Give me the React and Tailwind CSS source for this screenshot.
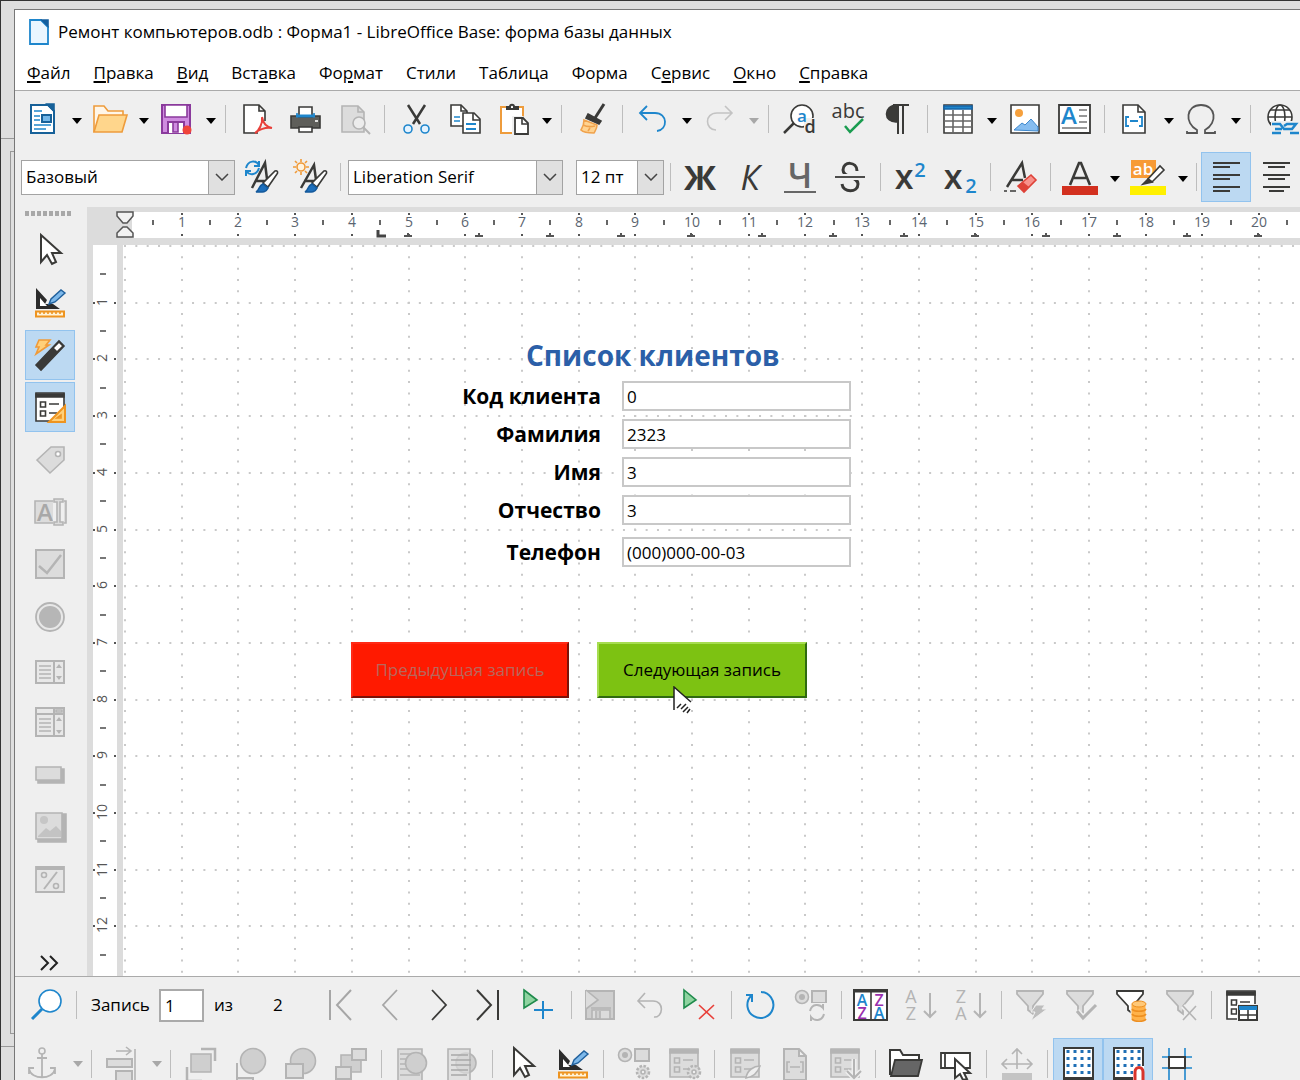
import React from "react";

const D = "#3a3a38";
const B = "#1e86cc";
const G = "#b4b4b4";
const L = "#dcdcdc";
const FONT = "font-['Open_Sans','Noto_Sans',sans-serif]";

function Icon({ children }) {
  return (
    <svg width="36" height="36" viewBox="0 0 36 36" fill="none" stroke={D} strokeWidth="1.6" className="shrink-0 overflow-visible" aria-hidden="true">
      {children}
    </svg>
  );
}

function T({ x, y, size, fill = D, weight = 400, italic, children }) {
  return (
    <text x={x} y={y} fontSize={size} fill={fill} stroke="none" fontWeight={weight} fontStyle={italic ? "italic" : "normal"} fontFamily="'Open Sans', sans-serif" textAnchor="middle">
      {children}
    </text>
  );
}

const Setsquare = () => (
  <>
    <path d="M4 4v21h24l-7-5H13l2-4z" fill="#2b2b2b" stroke="none" />
    <path d="M8 14l7 8H8z" fill="#fff" stroke="none" />
    <path d="M17 20l2-5 10-9 4 3-10 9z" fill="#7db8ea" stroke="#20609c" strokeWidth="1.4" />
    <path d="M4 27.500h28v5H4z" fill="#fff3d8" stroke="#ee9420" strokeWidth="2" />
    <path d="M8 28v2m4-2v2m4-2v2m4-2v2m4-2v2m4-2v2" stroke="#ee9420" />
  </>
);

const FormWin = ({ c = D, f = "#fff" }) => (
  <>
    <path d="M4 4h28v28H4z" fill={f} stroke={c} />
    <path d="M4 5h28v3H4z" fill={c} stroke={c} />
    <path d="M8.500 13h5v5h-5zM8.500 22h5v5h-5zM17 15h10M17 24h8" stroke={c} />
  </>
);

const Shapes = () => (
  <>
    <circle cx="9" cy="10" r="6.500" fill={L} stroke={G} />
    <circle cx="9" cy="10" r="3" fill={G} stroke="none" />
    <path d="M19 4h14v12H19z" fill={L} stroke={G} strokeWidth="2" />
  </>
);

const Gear = ({ x, y }) => (
  <>
    <circle cx={x} cy={y} r="6" fill={L} stroke={G} strokeWidth="2.500" strokeDasharray="2.500 1.500" />
    <circle cx={x} cy={y} r="2" fill="#efefef" stroke={G} />
  </>
);

const Funnel = ({ c = G, f = L }) => <path d="M4 4h26v3L20 19v8l-5-4v-4L4 7z" fill={f} stroke={c} strokeWidth="1.800" />;

const Brush = () => (
  <>
    <path d="M31 12c3-1 3 2 2 3l-9 13-5-4z" fill="#fff" stroke={D} />
    <path d="M19 25l5 4c-2 5-7 4-12 4 4-2 2-6 7-8z" fill="#1e70bd" stroke="#155a9c" />
  </>
);

const icons = {
  app: (
    <>
      <path d="M9 6h11l7 7v17H9z" fill="#eaf6ff" stroke={B} strokeWidth="1.800" />
      <path d="M21 6h6v6z" fill="#155f9e" stroke="#155f9e" />
    </>
  ),
  newdoc: (
    <>
      <path d="M6 4h17l6 6v22H6z" fill="#fff" stroke="#176199" strokeWidth="2" />
      <path d="M22 3h7v7z" fill="#176199" stroke="#176199" />
      <path d="M9 10h8M9 15h6M9 19h6M9 24h17M9 28h12" stroke="#1e86cc" />
      <path d="M17 14h9v7h-9z" fill="#74b7e8" stroke="#176199" strokeWidth="2" />
    </>
  ),
  open: (
    <>
      <path d="M2 31V5h10l4 5h15v6" fill="#fff6e8" stroke="#ee9c3c" />
      <path d="M7 14h28l-5 17H2z" fill="#ffd68c" stroke="#ee9c3c" />
    </>
  ),
  save: (
    <>
      <path d="M3 4h28v28H3z" fill="#cf8be0" stroke="#8a3a9c" strokeWidth="2" />
      <path d="M6 4h22v12H6z" fill="#fff" stroke="#8a3a9c" />
      <path d="M9 32V21h16v11" fill="#fff" stroke="#8a3a9c" strokeWidth="2" />
      <path d="M14 22v9h5v-9" fill="#cf8be0" stroke="#8a3a9c" />
      <circle cx="28" cy="29" r="4.500" fill="#f0443a" stroke="none" />
    </>
  ),
  pdf: (
    <>
      <path d="M27 20V10l-6-6H6v28h14M21 4v6h6" fill="none" />
      <path d="M7 5h13v6h6v12l-8 8H7z" fill="#fff" stroke="none" />
      <path d="M17 32c4-2 8-10 7-16 1 6 4 10 10 11-5-1-10 0-16 4" stroke="#e8403a" strokeWidth="2" />
    </>
  ),
  print: (
    <>
      <path d="M4 15h29v12H4z" fill="#5e5e5a" stroke={D} />
      <path d="M12 6h13v10H12z" fill="#fff" />
      <path d="M9 15h19" stroke={B} strokeWidth="3" />
      <path d="M10 12v3M27 12v3" stroke={B} />
      <path d="M12 26h13v5H12z" fill="#fff" />
      <path d="M28 20h3" stroke="#fff" />
    </>
  ),
  preview: (
    <>
      <path d="M6 5h16l6 6v20H6z" fill={L} stroke={G} />
      <path d="M22 5v6h6" stroke={G} />
      <circle cx="23" cy="22" r="6" fill="#ececec" stroke={G} />
      <path d="M27 26l7 7" stroke={G} strokeWidth="2" />
    </>
  ),
  cut: (
    <>
      <path d="M11 4l12 19M28 4L16 23" strokeWidth="2.500" />
      <circle cx="11" cy="28" r="4" stroke={B} fill="#e4f3ff" />
      <circle cx="28" cy="28" r="4" stroke={B} fill="#e4f3ff" />
    </>
  ),
  copy: (
    <>
      <path d="M5 4h10l6 6v15H5z" fill="#fff" />
      <path d="M15 4v6h6" />
      <path d="M8 16h6M8 20h6" stroke={B} />
      <path d="M17 12h11l6 6v14H17z" fill="#fff" />
      <path d="M27 12v7h7" />
      <path d="M20 23h10M20 28h10" stroke={B} strokeWidth="2" />
    </>
  ),
  paste: (
    <>
      <path d="M6 6h22v26H6z" fill="#fff" stroke="#ee9c3c" strokeWidth="2" />
      <path d="M12 8v-2h3c0-3 4-3 4 0h4v2z" fill="#fff" strokeWidth="2" />
      <path d="M17 15h11l6 5v15H17z" fill="#efefef" stroke="none" />
      <path d="M20 17h8l5 5v11H20z" fill="#fff" strokeWidth="1.800" />
      <path d="M27 17v6h6" />
    </>
  ),
  clone: (
    <>
      <path d="M30 3l-9 14" strokeWidth="3" />
      <path d="M14 13l13 7-2 3-13-6z" fill={D} stroke={D} />
      <path d="M10 19l13 5c0 4-2 6-3 8-5 0-10 0-13-3 2-3 3-6 3-10z" fill="#ffd391" stroke="#f0a24c" />
      <path d="M9 24c4 2 8 2 12 1M14 30l2-3" stroke="#f0a24c" />
    </>
  ),
  undo: <path d="M12 5L5 12l7 7M5 12h15c13 0 13 17 2 18" stroke={B} strokeWidth="1.800" />,
  redo: <path d="M23 5l7 7-7 7M30 12H15c-13 0-12 17-1 17" stroke="#c3c3c3" />,
  find: (
    <>
      <circle cx="21" cy="15" r="11" fill="#fff" />
      <path d="M13 22L3 32" strokeWidth="2.500" />
      <path d="M23 17h12v15H23z" fill="#efefef" stroke="none" />
      <T x="21" y="21" size="17" fill={B} weight={600}>a</T>
      <T x="29" y="32" size="18" weight={600}>d</T>
    </>
  ),
  spell: (
    <>
      <T x="18" y="17" size="20">abc</T>
      <path d="M15 25l5 6 13-13" stroke="#1a9c50" strokeWidth="2.500" />
    </>
  ),
  pilcrow: (
    <>
      <path d="M18 4v17C4 22 4 4 18 4z" fill={D} />
      <path d="M14 4h16M19 4v29M24 4v29" strokeWidth="2" />
    </>
  ),
  table: (
    <>
      <path d="M4 4h28v28H4z" fill="#fff" stroke={D} />
      <path d="M4 5h28v3H4z" fill={B} stroke="#1766a8" />
      <path d="M4 14h28M4 20h28M4 26h28M13 9v23M23 9v23" stroke="#666" />
    </>
  ),
  image: (
    <>
      <path d="M4 4h28v28H4z" fill="#fff" />
      <path d="M7 29l8-7 3 2 6-6 7 8v4z" fill="#86bdf0" stroke="#3d87cc" strokeWidth="1" />
      <circle cx="12" cy="12" r="4" fill="#f6a03c" stroke="none" />
    </>
  ),
  textbox: (
    <>
      <path d="M3 4h31v28H3z" fill="#fff" strokeWidth="1.800" />
      <T x="13" y="23" size="24" fill={B} weight={600}>A</T>
      <path d="M23 9h8M23 15h8M23 21h8M6 27h25" stroke="#777" />
    </>
  ),
  field: (
    <>
      <path d="M6 4h15l7 7v21H6z" fill="#fff" />
      <path d="M21 4v7h7" />
      <path d="M12 16H9v9h3M22 16h3v9h-3M13 20h8" stroke={B} strokeWidth="1.800" />
    </>
  ),
  omega: <path d="M3 30v2h10v-3C0 22 2 4 17 4s17 18 4 25v3h10v-2" stroke="#555" strokeWidth="1.800" />,
  link: (
    <>
      <circle cx="17" cy="16" r="12" fill="#fff" />
      <ellipse cx="17" cy="16" rx="5" ry="12" />
      <path d="M5 16h24M7 9h20M7 22h20" />
      <path d="M8 20h28v14H8z" fill="#efefef" stroke="none" />
      <path d="M9 23h8l4 5h8l4-5h-9l-3 2M9 32h9M36 32h-9M12 28h7" stroke={B} strokeWidth="2.500" />
    </>
  ),
  styleUpd: (
    <>
      <path d="M8 29l13-25 3 24M11 22h11" strokeWidth="2.500" />
      <path d="M2 9c2-8 10-8 13-3M15 2v5h-5M15 9c-2 7-9 8-13 3M2 17v-5h5" stroke={B} strokeWidth="2" />
      <Brush />
    </>
  ),
  styleNew: (
    <>
      <path d="M8 29l13-23 3 22M11 22h11" strokeWidth="2.500" />
      <circle cx="8" cy="8" r="4" fill="#fff3df" stroke="#f09a38" />
      <path d="M8 0v3M8 13v3M0 8h3M13 8h3M2 2l2 2M12 12l2 2M14 2l-2 2M4 12l-2 2" stroke="#f09a38" />
      <Brush />
    </>
  ),
  strike: (
    <>
      <path d="M25 12c0-10-14-10-14-1 0 8 15 6 15 14 0 9-15 9-16 0" strokeWidth="3" />
      <path d="M3 15h30v6H3z" fill="#efefef" stroke="none" />
      <path d="M3 18h30" strokeWidth="1.800" />
    </>
  ),
  sup: (
    <>
      <T x="12" y="30" size="34" weight={600}>x</T>
      <T x="28" y="18" size="20" fill={B} weight={600}>2</T>
    </>
  ),
  sub: (
    <>
      <T x="11" y="30" size="34" weight={600}>x</T>
      <T x="29" y="34" size="20" fill={B} weight={600}>2</T>
    </>
  ),
  clear: (
    <>
      <path d="M5 28L20 4l3 15M10 21h11" strokeWidth="2.500" />
      <path d="M2 32h3M8 32h6" />
      <path d="M16 27L29 16l5 5-12 12z" fill="#f7918b" stroke="#de4238" />
      <path d="M16 27l5-4 6 5-5 5z" fill="#de4238" stroke="none" />
    </>
  ),
  color: (
    <>
      <path d="M8 26L17 4h2l9 22M12 19h12" strokeWidth="2.600" />
      <path d="M0 27h36v9H0z" fill="#d3301f" stroke="none" />
    </>
  ),
  marker: (
    <>
      <path d="M1 1h25v18H1z" fill="#f79a35" stroke="none" />
      <T x="13" y="16" size="17" fill="#fff" weight={600}>ab</T>
      <path d="M18 20L30 7l4 4-12 12z" fill="#fff" />
      <path d="M13 25l5-5 4 3z" fill={D} />
      <path d="M0 27h36v9H0z" fill="#fff000" stroke="none" />
    </>
  ),
  alignL: <path d="M5 4h27M5 8h17M5 16h27M5 20h17M5 28h27M5 32h17" strokeWidth="2" />,
  alignC: <path d="M5 4h27M10 8h17M5 16h27M10 20h17M5 28h27M11 32h15" strokeWidth="2" />,
  pointer: <path d="M9 3v27l6-7 5 9 4-2-4-9h9z" fill="#fff" strokeWidth="2" />,
  design: <Setsquare />,
  wand: (
    <>
      <path d="M7 3h11l-4 5h3L4 17l3-7H4z" fill="#ffd07a" stroke="#f09a38" />
      <path d="M4 28L27 4l5 5L9 33z" fill={D} />
      <path d="M21 11l6-6 4 4-6 6z" fill="#fff" />
    </>
  ),
  formprops: (
    <>
      <FormWin />
      <path d="M33 17v16H17z" fill="#ffd07a" stroke="#ee9420" strokeWidth="2" />
      <path d="M29 26v3h-4z" fill="#fff" stroke="#ee9420" />
    </>
  ),
  tag: (
    <>
      <path d="M5 18L19 5h13v13L18 31z" fill={L} stroke={G} />
      <circle cx="26" cy="12" r="2.500" fill="#fff" stroke={G} />
    </>
  ),
  textfield: (
    <>
      <path d="M3 7h31v22H3z" fill={L} stroke={G} />
      <T x="13" y="27" size="24" fill="#a8a8a8" weight={600}>A</T>
      <path d="M21 5h11v26H21z" fill="#efefef" stroke="none" />
      <path d="M22 5h9v3h-3v20h3v3h-9v-3h3V8h-3z" fill={L} stroke={G} />
    </>
  ),
  check: (
    <>
      <path d="M4 4h28v28H4z" fill={L} stroke={G} strokeWidth="2" />
      <path d="M7 20l8 7L29 9" stroke={G} strokeWidth="2.500" />
    </>
  ),
  radio: (
    <>
      <circle cx="18" cy="18" r="14" fill="#e8e8e8" stroke={G} strokeWidth="1.800" />
      <circle cx="18" cy="18" r="11" fill="#b6b6b6" stroke="none" />
    </>
  ),
  list: (
    <>
      <path d="M4 10h28v22H4zM22 10v22" fill="#e8e8e8" stroke={G} strokeWidth="2" />
      <path d="M7 15h12M7 19h12M7 23h12M7 27h12" stroke={G} />
      <path d="M27 13l3 4h-6zM27 29l3-4h-6z" fill={G} stroke="none" />
    </>
  ),
  combo: (
    <>
      <path d="M4 4h28v28H4zM22 4v28M4 10h28" fill="#e8e8e8" stroke={G} strokeWidth="2" />
      <path d="M7 15h12M7 19h12M7 23h12M7 27h12M24 6h6v2h-6z" stroke={G} />
      <path d="M27 13l3 4h-6zM27 30l3-4h-6z" fill={G} stroke="none" />
    </>
  ),
  push: (
    <>
      <path d="M6 13h26v14H6z" fill={G} stroke={G} />
      <path d="M4 11h25v13H4z" fill={L} stroke={G} />
    </>
  ),
  imgbtn: (
    <>
      <path d="M6 6h28v28H6z" fill={G} stroke={G} />
      <path d="M4 5h26v26H4z" fill={L} stroke={G} />
      <circle cx="12" cy="12" r="4" fill="#c6c6c6" stroke="none" />
      <path d="M6 28l8-8 4 3 6-5 5 5v6H6z" fill="#c3c3c3" stroke="none" />
    </>
  ),
  percent: (
    <>
      <path d="M4 6h28v25H4z" fill="#e6e6e6" stroke={G} strokeWidth="1.800" />
      <path d="M4 5h28v4H4z" fill={G} stroke="none" />
      <circle cx="12" cy="14" r="2.500" stroke={G} />
      <circle cx="24" cy="25" r="2.500" stroke={G} />
      <path d="M25 11L12 28" stroke={G} strokeWidth="2" />
    </>
  ),
  search: (
    <>
      <circle cx="22" cy="14" r="11" fill="#fff" stroke={B} />
      <path d="M14 22L4 32" stroke={B} strokeWidth="3" />
    </>
  ),
  first: <path d="M7 3v30M28 3L14 18l14 15" stroke="#a6a6a6" strokeWidth="2" />,
  prev: <path d="M24 3L10 18l14 15" stroke="#a6a6a6" strokeWidth="1.800" />,
  next: <path d="M9 3l14 15L9 33" strokeWidth="1.800" />,
  last: <path d="M4 3l14 15L4 33M25 3v30" strokeWidth="2" />,
  addrec: (
    <>
      <path d="M1 3l13 10L1 21z" fill="#8ed3a0" stroke="#1f8b4c" />
      <path d="M11 23h19M20 14v18" stroke={B} strokeWidth="2" />
    </>
  ),
  saverec: (
    <>
      <path d="M3 4h28v28H3z" fill="#cfcfcf" stroke={G} strokeWidth="2" />
      <path d="M3 3l12 10L3 22M8 21h20M9 23h18v9H9zM13 24v8h4v-8" fill={L} stroke={G} />
    </>
  ),
  undorec: <path d="M12 6l-7 8 7 7M5 14h15c12 0 10 17 1 16" stroke={G} />,
  delrec: (
    <>
      <path d="M1 3l12 10L1 21z" fill="#8ed3a0" stroke="#1f8b4c" />
      <path d="M16 18l15 14M31 18L16 32" stroke="#e8403a" />
    </>
  ),
  refresh: <path d="M8 9a13 13 0 1 0 10-4M3 8h6v7" stroke={B} strokeWidth="2" />,
  refreshctl: (
    <>
      <Shapes />
      <path d="M16 16h18v18H16z" fill="#efefef" stroke="none" />
      <path d="M17 24c2-8 10-7 13-3v-4M31 27c-2 8-10 7-13 3v4" stroke={G} strokeWidth="2" />
    </>
  ),
  sort: (
    <>
      <path d="M1 3h33v30H1z" fill="#fff" strokeWidth="2" />
      <path d="M1 4h33" strokeWidth="3" />
      <path d="M18 5v28" />
      <T x="9" y="19" size="16" fill={B} weight={600}>A</T>
      <T x="9" y="32" size="16" fill="#9a2fae" weight={600}>Z</T>
      <T x="26" y="19" size="16" fill="#9a2fae" weight={600}>Z</T>
      <T x="26" y="32" size="16" fill={B} weight={600}>A</T>
    </>
  ),
  asc: (
    <>
      <T x="8" y="16" size="18" fill={G}>A</T>
      <T x="8" y="33" size="18" fill={G}>Z</T>
      <path d="M27 6v24M21 24l6 6 6-6" stroke={G} strokeWidth="2" />
    </>
  ),
  desc: (
    <>
      <T x="8" y="16" size="18" fill={G}>Z</T>
      <T x="8" y="33" size="18" fill={G}>A</T>
      <path d="M27 6v24M21 24l6 6 6-6" stroke={G} strokeWidth="2" />
    </>
  ),
  autofilter: (
    <>
      <Funnel />
      <path d="M23 18h9l-3 4h5L18 34l4-9h-4z" fill="#bdbdbd" stroke="#efefef" strokeWidth="1" />
    </>
  ),
  applyfilter: (
    <>
      <Funnel />
      <path d="M14 24l6 7 13-13" stroke="#efefef" strokeWidth="6" />
      <path d="M14 24l6 7 13-13" stroke={G} strokeWidth="3" />
    </>
  ),
  dbfilter: (
    <>
      <Funnel c={D} f="#fff" />
      <path d="M18 17v15c2 3 13 3 15 0V17z" fill="#ffb24a" stroke="#efefef" strokeWidth="1" />
      <ellipse cx="26" cy="17" rx="7" ry="3" fill="#ffc877" stroke="#ee8f20" strokeWidth="1" />
      <path d="M19 22c2 3 12 3 14 0M19 27c2 3 12 3 14 0M19 32c2 3 12 3 14 0" stroke="#ee8f20" />
    </>
  ),
  nofilter: (
    <>
      <Funnel />
      <path d="M20 19l13 14M33 19L20 33" stroke="#efefef" strokeWidth="5" />
      <path d="M20 19l13 14M33 19L20 33" stroke={G} />
    </>
  ),
  datasrc: (
    <>
      <FormWin />
      <path d="M14 17h22v18H14z" fill="#efefef" stroke="none" />
      <path d="M16 19h18v14H16z" fill="#fff" strokeWidth="2" />
      <path d="M16 19h18v4H16z" fill={B} stroke="none" />
      <path d="M17 28h17M25 23v10" />
    </>
  ),
  anchor: (
    <>
      <circle cx="17" cy="6" r="3" stroke={G} />
      <path d="M17 9v24M12 13h10M4 24c2 11 24 11 26 0M4 29v-6h5M30 29v-6h-5" stroke={G} strokeWidth="1.800" />
    </>
  ),
  align: (
    <>
      <path d="M31 4v32M12 6h15M22 2l5 4-5 4" stroke={G} />
      <path d="M3 14h25v8H3zM12 26h16v10H12z" fill={L} stroke={G} strokeWidth="2" />
    </>
  ),
  front: (
    <>
      <path d="M18 4h14v12M4 22v14h15" stroke={G} strokeWidth="2.500" />
      <path d="M8 9h20v18H8z" fill="#cfcfcf" stroke={G} />
    </>
  ),
  forward: (
    <>
      <path d="M4 18v15h16v3H4z" fill={L} stroke={G} strokeWidth="2" />
      <circle cx="20" cy="16" r="12.500" fill="#cfcfcf" stroke={G} />
    </>
  ),
  backward: (
    <>
      <circle cx="20" cy="16" r="12.500" fill="#cfcfcf" stroke={G} />
      <path d="M3 19h17v14H3z" fill={L} stroke={G} strokeWidth="2" />
    </>
  ),
  back: (
    <>
      <path d="M8 10h20v17H8z" fill="#cfcfcf" stroke={G} />
      <path d="M19 4h14v11H19zM3 22h15v12H3z" fill={L} stroke={G} strokeWidth="2" />
    </>
  ),
  toFg: (
    <>
      <path d="M4 4h24v32H4z" fill={L} stroke={G} />
      <path d="M6 9h20M6 14h20M6 19h20M6 24h20M6 30h20" stroke={G} />
      <circle cx="22" cy="18" r="10.500" fill="#cfcfcf" stroke={G} />
    </>
  ),
  toBg: (
    <>
      <circle cx="22" cy="18" r="10" fill="#cfcfcf" stroke={G} />
      <path d="M4 4h22v32H4z" fill={L} stroke={G} fillOpacity="0.700" />
      <path d="M7 10h17M7 15h20M7 20h20M7 25h17M7 30h16" stroke="#a8a8a8" />
    </>
  ),
  ctlprops: (
    <>
      <Shapes />
      <Gear x="27" y="27" />
    </>
  ),
  formset: (
    <>
      <FormWin c={G} f={L} />
      <Gear x="28" y="27" />
    </>
  ),
  formnav: (
    <>
      <FormWin c={G} f={L} />
      <path d="M19 33c1-8 8-12 14-12-2 6-7 11-14 12z" fill="#efefef" stroke={G} />
    </>
  ),
  addfield: (
    <>
      <path d="M7 4h15l7 7v24H7zM22 4v7h7" fill={L} stroke={G} strokeWidth="2" />
      <path d="M13 17h-3v10h3M23 17h3v10h-3M13 22h10" stroke={G} />
    </>
  ),
  taborder: (
    <>
      <FormWin c={G} f={L} />
      <path d="M27 14v19M20 26l7 7 7-7" stroke="#efefef" strokeWidth="5" />
      <path d="M27 14v19M20 26l7 7 7-7" stroke={G} strokeWidth="2" />
    </>
  ),
  folder: (
    <>
      <path d="M2 30V5h10l3 5h16v5" fill="#fff" strokeWidth="2" />
      <path d="M7 15h27l-4 16H3z" fill="#666" stroke={D} strokeWidth="1.800" />
    </>
  ),
  autofocus: (
    <>
      <path d="M3 8h29v15H3zM7 8v15" fill="#fff" strokeWidth="1.800" />
      <path d="M17 14v19l5-4 3 6 4-1-3-6h6z" fill="#fff" strokeWidth="2" />
    </>
  ),
  position: (
    <>
      <path d="M18 4v20M13 9l5-5 5 5M3 19h30M8 14l-5 5 5 5M28 14l5 5-5 5" stroke={G} />
      <path d="M3 28h30v8H3z" fill="#c4c4c4" stroke="none" />
    </>
  ),
  grid: (
    <>
      <path d="M4 3h29v32H4z" fill="#fff" strokeWidth="2" />
      <path d="M8 5v28M15 5v28M22 5v28M29 5v28" stroke="#1e6fb5" strokeWidth="3" strokeDasharray="3 4" />
      <path d="M4 34h29" strokeWidth="4" />
    </>
  ),
  snap: (
    <>
      <path d="M4 3h29v32H4z" fill="#fff" strokeWidth="2" />
      <path d="M8 5v28M15 5v28M22 5v28M29 5v17" stroke="#1e6fb5" strokeWidth="3" strokeDasharray="3 4" />
      <path d="M4 34h20" strokeWidth="4" />
      <path d="M23 21h11v15H23z" fill="#fff" stroke="none" />
      <path d="M25 36v-9c0-6 8-6 8 0v9" stroke="#d8342c" strokeWidth="3" />
    </>
  ),
  guides: (
    <>
      <path d="M2 12h30M2 23h30M9 3v32M25 3v32" stroke={B} strokeWidth="1.600" />
      <path d="M9 12h16v11H9z" fill="#fff" strokeWidth="2" />
    </>
  ),
};

const Sep = ({ w = "w-[10px]" }) => (
  <span className={`flex shrink-0 justify-center ${w}`} role="separator">
    <span className="h-7 w-px bg-[#bdbdbd]" />
  </span>
);

const Drop = ({ off }) => (
  <button type="button" aria-label="Ещё" disabled={off} className="flex h-12 w-[18px] shrink-0 items-center justify-center pl-0.5 pt-1">
    <svg width="10" height="6" viewBox="0 0 10 6" aria-hidden="true">
      <path d="M0 0h10L5 6z" fill={off ? "#a8a8a8" : "#000"} />
    </svg>
  </button>
);

function Tool({ icon, label, w = "w-[50px]", on, children }) {
  return (
    <button
      type="button"
      aria-label={label || icon}
      aria-pressed={on}
      className={`flex h-[50px] shrink-0 items-center justify-center ${w} ${on ? "border border-[#92c3ee] bg-[#bcd9f2]" : ""}`}
    >
      {children || <Icon>{icons[icon]}</Icon>}
    </button>
  );
}

function Strip({ items, w, sep }) {
  return items.map((it, i) => {
    if (it === "|") return <Sep key={i} w={sep} />;
    if (it === "v") return <Drop key={i} />;
    if (it === "-v") return <Drop key={i} off />;
    if (it[0] === "*") return <Tool key={i} icon={it.slice(1)} w={w} on />;
    return <Tool key={i} icon={it} w={w} />;
  });
}

function Combo({ label, value, className }) {
  return (
    <div className={`relative h-[35px] shrink-0 ${className}`}>
      <select aria-label={label} defaultValue={value} className="h-full w-full appearance-none border border-[#a3a3a3] bg-white pl-1 text-[17px] text-black">
        <option>{value}</option>
      </select>
      <span className="pointer-events-none absolute inset-y-0 right-0 flex w-[27px] items-center justify-center border border-[#a3a3a3] bg-[#e0e0e0]">
        <svg width="14" height="8" viewBox="0 0 14 8" fill="none" stroke="#444" strokeWidth="1.500" aria-hidden="true">
          <path d="M1 1l6 6 6-6" />
        </svg>
      </span>
    </div>
  );
}

const menu = [
  ["", "Ф", "айл"],
  ["", "П", "равка"],
  ["", "В", "ид"],
  ["Вст", "а", "вка"],
  ["Фо", "р", "мат"],
  ["Стили", "", ""],
  ["Таблица", "", ""],
  ["Форма", "", ""],
  ["С", "е", "рвис"],
  ["", "О", "кно"],
  ["", "С", "правка"],
];

const standard = ["newdoc", "v", "open", "v", "save", "v", "|", "pdf", "print", "preview", "|", "cut", "copy", "paste", "v", "|", "clone", "|", "undo", "v", "redo", "-v", "|", "find", "spell", "pilcrow", "|", "table", "v", "image", "textbox", "|", "field", "v", "omega", "v", "|", "link"];
const controls = ["pointer", "design", "*wand", "*formprops", "tag", "textfield", "check", "radio", "list", "combo", "push", "imgbtn", "percent"];
const navigation = ["first", "prev", "next", "last", "addrec", "|", "saverec", "undorec", "delrec", "|", "refresh", "refreshctl", "|", "sort", "asc", "desc", "|", "autofilter", "applyfilter", "dbfilter", "nofilter", "|", "datasrc"];
const designBar = ["anchor", "-v", "|", "align", "-v", "|", "front", "forward", "backward", "back", "|", "toFg", "toBg", "|", "pointer", "design", "|", "ctlprops", "formset", "|", "formnav", "addfield", "taborder", "|", "folder", "autofocus", "|", "position", "|", "*grid", "*snap", "guides"];

const CM = 56.7;
const at = (n) => Math.round(n * CM);
const range = (n) => Array.from({ length: n }, (_, i) => i);

function TopRuler() {
  return (
    <svg className="block h-[38px] w-full bg-[#dcdcdc]" aria-hidden="true" fontFamily="'Open Sans', sans-serif">
      <rect x="45" y="5" width="100%" height="26" fill="#fff" />
      {range(20).map((i) => {
        const x = 38 + at(i + 1);
        return (
          <g key={i} fill="#555">
            <text x={x} y="20" fontSize="14" textAnchor="middle" fill="#5b6470">{i + 1}</text>
            <rect x={x - 1} y="6" width="2" height="2" />
            <rect x={x - 1} y="27" width="2" height="2" />
          </g>
        );
      })}
      {range(21).map((i) => (
        <rect key={i} x={38 + at(i + 0.5) - 1} y="13" width="2" height="5" fill="#666" />
      ))}
      {range(13).map((i) => (
        <path key={i} d={`M${321 + Math.round(i * 70.85)} 26v3m-4 0h8`} stroke="#555" strokeWidth="2" />
      ))}
      <path d="M291 23v6h8" fill="none" stroke="#444" strokeWidth="3" />
      <path d="M30 5h16v4l-6 7h-4l-6-7zM30 30h16v-4l-6-6h-4l-6 6z" fill="#f2f2f2" stroke="#555" strokeWidth="1.500" />
    </svg>
  );
}

function SideRuler() {
  return (
    <svg className="block h-full w-[36px] shrink-0 bg-[#dcdcdc]" aria-hidden="true" fontFamily="'Open Sans', sans-serif">
      <rect x="6" y="0" width="24" height="100%" fill="#fff" />
      {range(12).map((i) => {
        const y = at(i + 1);
        return (
          <g key={i} fill="#555">
            <text transform={`translate(20 ${y}) rotate(-90)`} fontSize="14" textAnchor="middle">{i + 1}</text>
            <rect x="6" y={y} width="2" height="2" />
            <rect x="27" y={y} width="2" height="2" />
          </g>
        );
      })}
      {range(13).map((i) => (
        <rect key={i} x="13" y={at(i + 0.5)} width="6" height="2" fill="#777" />
      ))}
    </svg>
  );
}

function PageGrid() {
  return (
    <svg className="absolute inset-0 h-full w-full" stroke="#c9c9c9" strokeWidth="2" strokeDasharray="2 9.34" aria-hidden="true">
      {range(40).map((i) => (
        <line key={i} x1={2 + at(i)} x2={2 + at(i)} y1="0" y2="2000" />
      ))}
      {range(30).map((i) => (
        <line key={i} x1="1" x2="4000" y1={1 + at(i)} y2={1 + at(i)} />
      ))}
    </svg>
  );
}

const fields = [
  ["code", "Код клиента", "0"],
  ["surname", "Фамилия", "2323"],
  ["name", "Имя", "3"],
  ["patronymic", "Отчество", "3"],
  ["phone", "Телефон", "(000)000-00-03"],
];

function ClientForm() {
  return (
    <form className="relative ml-[228px] mt-[92px] w-[500px]" onSubmit={(e) => e.preventDefault()}>
      <h1 className="pl-[175px] text-[28px] font-bold leading-9 text-[#2b5fa8]">Список клиентов</h1>
      <div className="mt-2 flex flex-col gap-2">
        {fields.map(([id, label, value]) => (
          <div key={id} className="flex h-[30px] items-center justify-end gap-[21px] last:mt-1">
            <label htmlFor={id} className="text-[21px] font-bold leading-7 text-black">{label}</label>
            <input id={id} defaultValue={value} className="h-[30px] w-[229px] border-2 border-[#c8c8c8] bg-white px-[3px] text-[17px] text-black" />
          </div>
        ))}
      </div>
      <div className="relative mt-[75px] flex gap-7 text-[17px]">
        <button type="button" disabled className="h-14 w-[218px] border-2 border-[#ff2a16] border-b-[#7c1208] border-r-[#7c1208] bg-[#ff1a00] text-[#b8675c]">
          Предыдущая запись
        </button>
        <button type="button" className="h-14 w-[210px] border-2 border-[#a6dd50] border-b-[#2f6a10] border-r-[#2f6a10] bg-[#7dc212] text-black">
          Следующая запись
        </button>
        <svg className="absolute left-[322px] top-11" width="20" height="30" viewBox="0 0 20 30" aria-hidden="true">
          <path d="M1 1v23l5-6 8-2h4z" fill="#fff" />
          <path d="M18 16L1 1v23M4 22l4-4M8 23l5-5M10 26l5-5M14 27l3-4" fill="none" stroke="#222" strokeWidth="1.500" />
        </svg>
      </div>
    </form>
  );
}

export default function App() {
  return (
    <div className={`flex h-screen overflow-hidden border-l border-t border-[#333] bg-[#dedede] text-[17px] text-black ${FONT}`}>
      <div className="flex w-[13px] shrink-0 flex-col">
        <div className="h-[138px] border-b border-[#999]" />
        <div className="ml-[9px] mt-3 flex-1 border border-r-0 border-[#999]" />
        <div className="mt-3 h-[34px] border-t border-[#999]" />
      </div>
      <div className="mt-2 flex min-w-0 flex-1 flex-col border-l border-t border-[#777] bg-[#efefef]">
        <header className="shrink-0 border-b border-[#aaa] bg-white">
          <div className="flex h-11 items-center gap-px pl-1.5">
            <Icon>{icons.app}</Icon>
            <span className="whitespace-nowrap">Ремонт компьютеров.odb : Форма1 - LibreOffice Base: форма базы данных</span>
          </div>
          <nav className="flex h-9 items-center gap-[23px] whitespace-nowrap pl-3 pt-0.5">
            {menu.map(([a, u, b]) => (
              <button key={a + u + b} type="button">
                {a}
                <u className="decoration-2 underline-offset-2">{u}</u>
                {b}
              </button>
            ))}
          </nav>
        </header>

        <div className="flex h-14 shrink-0 items-center overflow-hidden pl-[3px]">
          <Strip items={standard} w="w-[49px]" sep="w-3" />
        </div>
        <div className="flex h-[60px] shrink-0 items-center overflow-hidden pl-1.5">
          <Combo label="Стиль абзаца" value="Базовый" className="mr-0.5 w-[214px]" />
          <Strip items={["styleUpd", "styleNew", "|"]} w="w-[49px]" />
          <Combo label="Гарнитура" value="Liberation Serif" className="ml-[3px] mr-[13px] w-[215px]" />
          <Combo label="Кегль" value="12 пт" className="mr-px w-[88px]" />
          <Sep />
          <Tool label="Полужирный"><span className="text-[34px] font-bold leading-9 text-[#3a3a38]">Ж</span></Tool>
          <Tool label="Курсив"><span className="text-[34px] italic leading-9 text-[#3a3a38]">К</span></Tool>
          <Tool label="Подчёркнутый"><span className="h-8 border-b-2 border-[#666] px-1 text-[34px] font-semibold leading-7 text-[#666]">Ч</span></Tool>
          <Strip items={["strike", "|", "sup", "sub", "|", "clear", "|", "color", "v", "marker", "v", "|", "*alignL", "alignC"]} />
        </div>

        <main className="flex min-h-0 flex-1">
          <aside className="flex w-[72px] shrink-0 flex-col pl-2.5">
            <div className="mb-[9px] mt-1 h-[5px] w-12 bg-[repeating-linear-gradient(90deg,#a8a8a8_0_4px,transparent_4px_6px)]" />
            <div className="flex min-h-0 flex-1 flex-col justify-between">
              <Strip items={controls} />
            </div>
            <button type="button" aria-label="Ещё элементы" className="flex h-[72px] shrink-0 items-end pb-1 pl-3.5">
              <svg width="22" height="18" viewBox="0 0 22 18" fill="none" stroke="#222" strokeWidth="2" aria-hidden="true">
                <path d="M2 2l7 7-7 7M11 2l7 7-7 7" />
              </svg>
            </button>
          </aside>
          <div className="flex min-w-0 flex-1 flex-col">
            <TopRuler />
            <div className="flex min-h-0 flex-1">
              <SideRuler />
              <div className="relative min-w-0 flex-1 overflow-hidden bg-white">
                <PageGrid />
                <ClientForm />
              </div>
            </div>
          </div>
        </main>

        <footer className="shrink-0 border-t border-[#aaa]">
          <div className="flex h-14 items-center overflow-hidden pl-1.5">
            <Strip items={["search", "|"]} />
            <div className="flex w-[235px] shrink-0 items-center pl-2.5">
              <label htmlFor="record" className="w-[68px]">Запись</label>
              <input id="record" defaultValue="1" className="h-[33px] w-[45px] border-2 border-[#aaa] bg-white px-1" />
              <span className="pl-2.5">из</span>
              <span className="pl-10">2</span>
            </div>
            <Strip items={navigation} />
          </div>
          <div className="flex h-[47px] items-start overflow-hidden pl-[3px] pt-[5px]">
            <Strip items={designBar} sep="w-[11px] mt-3" />
          </div>
        </footer>
      </div>
    </div>
  );
}
